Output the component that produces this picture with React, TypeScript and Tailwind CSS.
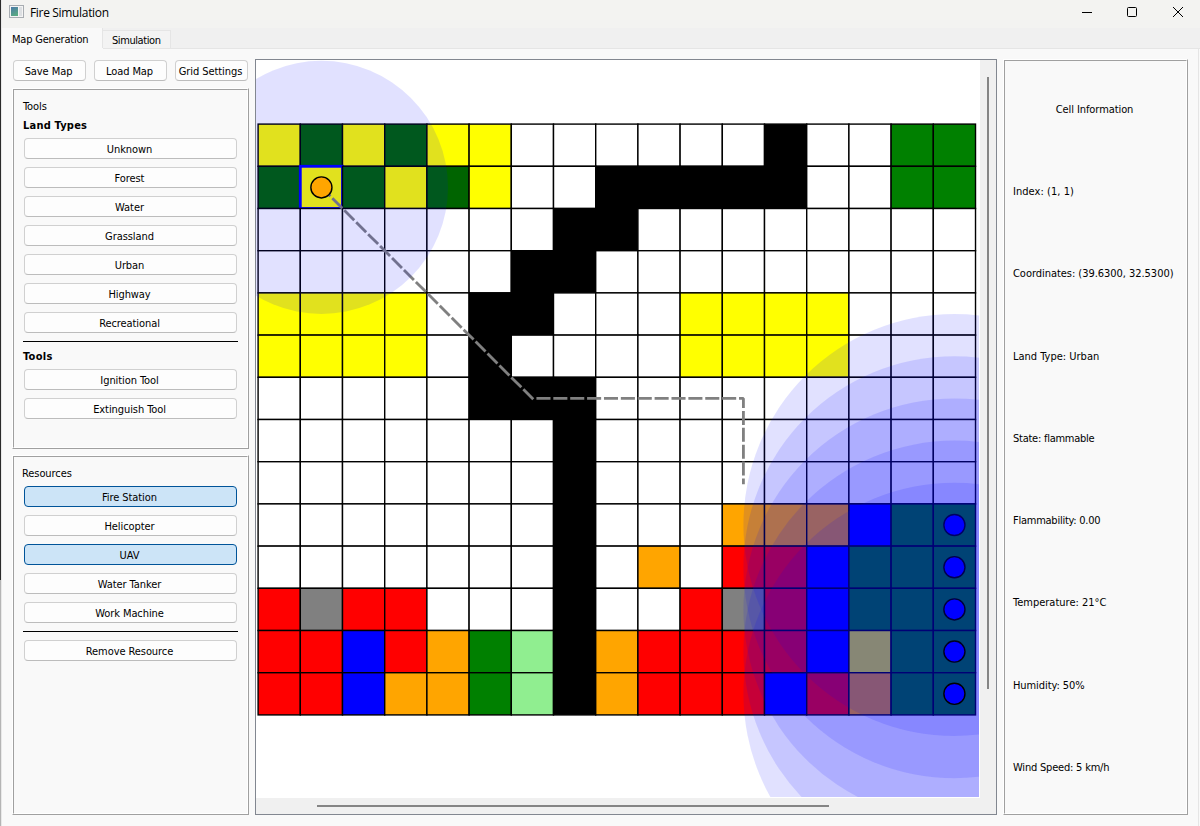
import React from "react";

const COLORS: Record<string, string> = {
  ".": "#ffffff",
  Y: "#ffff00",
  D: "#006400",
  G: "#008000",
  K: "#000000",
  O: "#ffa500",
  R: "#ff0000",
  B: "#0000ff",
  L: "#90ee90",
  A: "#808080",
};

const MAP = [
  "YDYDYY......K..GG",
  "DYDYDY..KKKKK..GG",
  ".......KK........",
  "......KK.........",
  "YYYY.KK...YYYY...",
  "YYYY.K....YYYY...",
  ".....KKK.........",
  ".......K.........",
  ".......K.........",
  ".......K...OOOBGG",
  ".......K.O.RRBGGG",
  "RARR...K..RARBGGG",
  "RRBROGLKORRRRBYGG",
  "RRBOOGLKORRRBROGG",
];

const SCALE = 1.4067;

const UNITS = [
  { row: 1, col: 1, range: 90, fill: "#ffa500" },
  { row: 9, col: 16, range: 150, fill: "#0000ff" },
  { row: 10, col: 16, range: 150, fill: "#0000ff" },
  { row: 11, col: 16, range: 150, fill: "#0000ff" },
  { row: 12, col: 16, range: 150, fill: "#0000ff" },
  { row: 13, col: 16, range: 150, fill: "#0000ff" },
];

function MapView() {
  return (
    <svg width="724" height="738" viewBox="0 0 724 738" className="block bg-white">
      <defs>
        <clipPath id="scene">
          <rect x="0" y="0" width="723" height="737" />
        </clipPath>
      </defs>
      <g clipPath="url(#scene)">
        <g transform={`translate(2.1 64.1) scale(${SCALE})`}>
          {MAP.map((line, row) =>
            line.split("").map((cell, col) => {
              const selected = row === 1 && col === 1;
              return (
                <rect
                  key={`${row}-${col}`}
                  x={col * 30}
                  y={row * 30}
                  width="30"
                  height="30"
                  fill={COLORS[cell]}
                  stroke={selected ? "#0000ff" : "#000000"}
                  strokeWidth={selected ? 2 : 1}
                />
              );
            }),
          )}
          <path
            d="M45 45L195 195H345V255"
            fill="none"
            stroke="#808080"
            strokeWidth="2"
            strokeDasharray="8 4"
            strokeLinecap="square"
            strokeLinejoin="bevel"
          />
          {UNITS.map((u) => {
            const cx = u.col * 30 + 15;
            const cy = u.row * 30 + 15;
            return (
              <g key={`${u.row}-${u.col}`}>
                <circle cx={cx} cy={cy} r={u.range} fill="#0000ff" fillOpacity={30 / 255} />
                <circle cx={cx} cy={cy} r="7.5" fill={u.fill} stroke="#000000" strokeWidth="1" />
              </g>
            );
          })}
        </g>
      </g>
    </svg>
  );
}

function Button({ label, active = false }: { label: string; active?: boolean }) {
  return (
    <button
      className={
        active
          ? "flex h-[21px] w-full items-center justify-center rounded-[4px] border border-[#005499] bg-[#cce4f7] pt-0.5 pr-0.5 whitespace-nowrap"
          : "flex h-[21px] w-full items-center justify-center rounded-[4px] border border-[#d0d0d0] border-b-[#bcbcbc] bg-[#fdfdfd] pt-0.5 pr-0.5 whitespace-nowrap"
      }
    >
      {label}
    </button>
  );
}

function Frame({ className, children }: { className: string; children: React.ReactNode }) {
  return (
    <div className={`border border-t-white border-l-white border-r-[#a0a0a0] border-b-[#a0a0a0] ${className}`}>
      <div className="h-full border border-t-[#a0a0a0] border-l-[#a0a0a0] border-r-white border-b-white">{children}</div>
    </div>
  );
}

const LAND = ["Unknown", "Forest", "Water", "Grassland", "Urban", "Highway", "Recreational"];
const INFO = [
  { text: "Index: (1, 1)", tracking: "tracking-[0.05px]" },
  { text: "Coordinates: (39.6300, 32.5300)", tracking: "tracking-[-0.04px]" },
  { text: "Land Type: Urban", tracking: "tracking-normal" },
  { text: "State: flammable", tracking: "tracking-[-0.25px]" },
  { text: "Flammability: 0.00", tracking: "tracking-[-0.25px]" },
  { text: "Temperature: 21°C", tracking: "tracking-normal" },
  { text: "Humidity: 50%", tracking: "tracking-[-0.08px]" },
  { text: "Wind Speed: 5 km/h", tracking: "tracking-[-0.2px]" },
];

export default function App() {
  return (
    <div className="flex h-[826px] w-[1200px] overflow-hidden bg-[#f9f9f9] font-['DejaVu_Sans_Condensed','DejaVu_Sans',sans-serif] text-[11px] leading-[14px] tracking-[-0.08px] text-black [font-stretch:condensed]">
      <div className="flex w-px shrink-0 flex-col">
        <div className="h-[580px] bg-[#2a2a2a]" />
        <div className="flex-1 bg-[#b4b4b4]" />
      </div>
      <div className="flex min-w-0 flex-1 flex-col border-l border-[#e8e8e8]">
        <header className="flex h-7 shrink-0 items-start bg-[#f3f3f1]">
          <svg width="16" height="14" viewBox="0 0 16 14" className="mt-[5px] ml-[7px]">
            <defs>
              <linearGradient id="app" x1="0" y1="0" x2="0.4" y2="1">
                <stop offset="0" stopColor="#4a78a8" />
                <stop offset="1" stopColor="#58a884" />
              </linearGradient>
            </defs>
            <rect x="0.5" y="0.5" width="14" height="12" fill="#f4f4f4" stroke="#a8adb2" />
            <rect x="2" y="2" width="7" height="9" fill="url(#app)" />
            <rect x="10" y="2" width="3" height="9" fill="#dcdfe2" />
          </svg>
          <span className="mt-[5px] ml-[5px] font-['Open_Sans','Noto_Sans',sans-serif] text-[12px] leading-4 tracking-[-0.33px] whitespace-nowrap [font-stretch:normal]">
            Fire Simulation
          </span>
          <svg width="124" height="24" viewBox="0 0 124 24" className="ml-auto" fill="none" stroke="#000">
            <path d="M6 12.5H16" />
            <rect x="51.5" y="7.5" width="9" height="9" rx="1" />
            <path d="M97 7L107 17M107 7L97 17" />
          </svg>
        </header>
        <nav className="flex h-5 shrink-0 items-end bg-[#f0f0f0]">
          <div className="h-5 w-[101px] border-r border-[#e5e5e5] bg-[#f9f9f9] pt-[5px] pl-2.5 tracking-[-0.2px] whitespace-nowrap">
            Map Generation
          </div>
          <div className="h-[18px] w-[68px] border-t border-r border-[#e5e5e5] bg-[#f3f3f3] pt-[3px] pl-[9px] tracking-[-0.42px] whitespace-nowrap">
            Simulation
          </div>
        </nav>
        <div className="flex shrink-0">
          <div className="h-px w-[101px]" />
          <div className="h-px flex-1 bg-[#e5e5e5]" />
        </div>
        <main className="mr-px flex min-h-0 flex-1 items-start border-r border-[#e5e5e5] pt-2.5 pl-2.5">
          <section className="flex h-[756px] w-[237px] shrink-0 flex-col">
            <div className="mt-px grid grid-cols-3 gap-2 pr-px pl-px">
              <Button label="Save Map" />
              <Button label="Load Map" />
              <Button label="Grid Settings" />
            </div>
            <Frame className="mt-[7px] h-[361px] shrink-0">
              <div className="px-[9px] pt-2.5">
                <div>Tools</div>
                <div className="mt-[5px] font-bold tracking-[0.2px]">Land Types</div>
                <div className="mt-[5px] flex flex-col gap-2 px-px">
                  {LAND.map((l) => (
                    <Button key={l} label={l} />
                  ))}
                </div>
                <div className="mt-2 h-px bg-black" />
                <div className="mt-2 font-bold tracking-[0.3px]">Tools</div>
                <div className="mt-[5px] flex flex-col gap-2 px-px">
                  <Button label="Ignition Tool" />
                  <Button label="Extinguish Tool" />
                </div>
              </div>
            </Frame>
            <Frame className="mt-[6px] h-[360px] shrink-0">
              <div className="px-[9px] pt-2.5">
                <div className="-ml-px">Resources</div>
                <div className="mt-[5px] flex flex-col gap-2 px-px">
                  <Button label="Fire Station" active />
                  <Button label="Helicopter" />
                  <Button label="UAV" active />
                  <Button label="Water Tanker" />
                  <Button label="Work Machine" />
                </div>
                <div className="mt-2 h-px bg-black" />
                <div className="mt-2 px-px">
                  <Button label="Remove Resource" />
                </div>
              </div>
            </Frame>
          </section>
          <section className="ml-1.5 flex h-[756px] w-[742px] shrink-0 flex-col border border-[#828790] bg-[#f0f0f0]">
            <div className="flex">
              <MapView />
              <div className="flex-1 pt-[17px] pl-[7px]">
                <div className="h-[612px] w-0.5 bg-[#858585]" />
              </div>
            </div>
            <div className="flex-1 pt-[7px] pl-[61px]">
              <div className="h-0.5 w-[512px] bg-[#858585]" />
            </div>
          </section>
          <Frame className="ml-1.5 h-[756px] w-[185px] shrink-0">
            <div className="px-2 pt-[42px]">
              <div className="mb-[68px] pr-0.5 text-center">Cell Information</div>
              <div className="flex flex-col gap-[68.27px]">
                {INFO.map(({ text, tracking }) => (
                  <div key={text} className={`whitespace-nowrap ${tracking}`}>
                    {text}
                  </div>
                ))}
              </div>
            </div>
          </Frame>
        </main>
      </div>
    </div>
  );
}
